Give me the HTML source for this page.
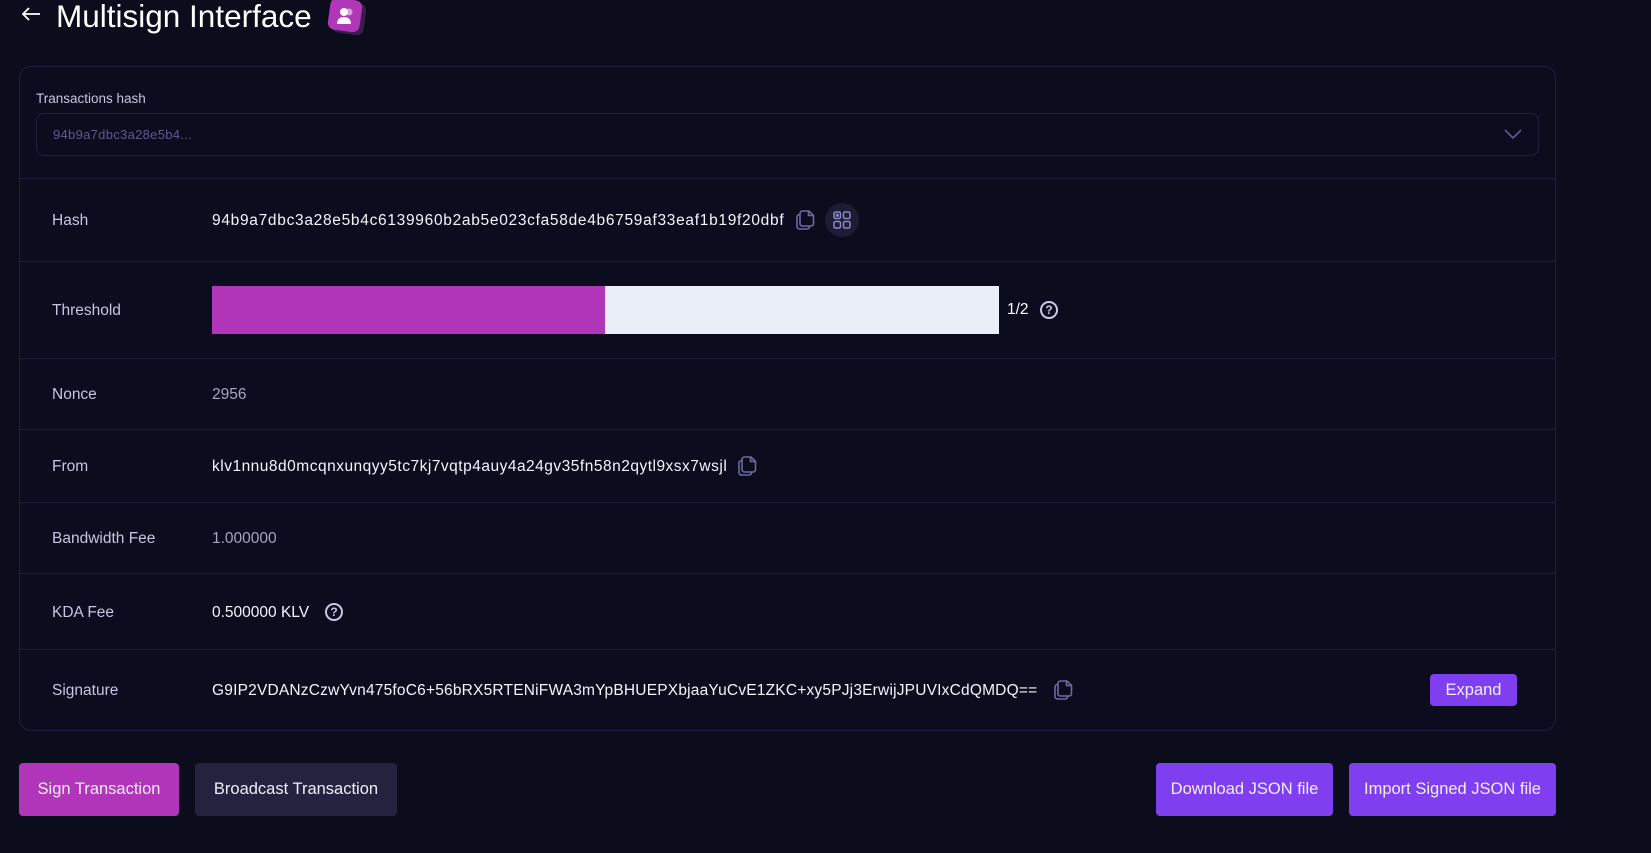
<!DOCTYPE html>
<html><head><meta charset="utf-8"><style>
*{box-sizing:border-box;margin:0;padding:0}
body{width:1651px;height:853px;background:#0b0c1c;font-family:"Liberation Sans",sans-serif;color:#fff;position:relative;overflow:hidden}
.abs{position:absolute}
.title{left:56px;top:-2px;font-size:31.5px;line-height:36px;color:#fff}
.card{left:19px;top:66px;width:1537px;height:665px;border:1px solid #1f2040;border-radius:12px;background:#0b0c1d}
.div{position:absolute;left:19px;width:1537px;height:1px;background:#1c1d38}
.lab{position:absolute;left:52px;font-size:15.5px;color:#c6c5e4;transform:translateY(-50%);margin-top:1px}
.val{position:absolute;left:212px;font-size:15.5px;color:#f4f4fa;transform:translateY(-50%);white-space:nowrap;margin-top:1px}
.btn{position:absolute;border-radius:4px;font-size:16.5px;color:#f1eefc;display:flex;align-items:center;justify-content:center}
.q{display:inline-block;width:18px;height:18px;border:2px solid #c9c8e6;border-radius:50%;font-size:12px;line-height:14px;text-align:center;color:#c9c8e6;font-weight:bold}
</style></head><body>
<svg class="abs" style="left:20px;top:6px" width="22" height="16" viewBox="0 0 22 16"><path d="M20 8H3M9 2L3 8l6 6" stroke="#fff" stroke-width="1.8" fill="none"/></svg>
<div class="abs title">Multisign Interface</div>
<div class="abs" style="left:333px;top:2px;width:32px;height:32px;border-radius:7px;background:#3a1d4a;transform:rotate(8deg)"></div>
<div class="abs" style="left:329px;top:-1px;width:32px;height:32px;border-radius:7px;background:#b038b8;transform:rotate(8deg)"></div>
<svg class="abs" style="left:335px;top:6px" width="22" height="20" viewBox="0 0 22 20"><circle cx="14" cy="6" r="3.5" fill="#d89ee0"/><circle cx="9" cy="6" r="4" fill="#fff"/><path d="M2 18c0-5 3-7 7-7s7 2 7 7z" fill="#fff"/></svg>
<div class="abs card"></div>
<div class="abs" style="left:36px;top:91px;font-size:13.5px;color:#c6c5e4">Transactions hash</div>
<div class="abs" style="left:36px;top:113px;width:1503px;height:43px;border:1px solid #1f2040;border-radius:8px"></div>
<div class="abs" style="left:53px;top:127px;font-size:13px;color:#5e5a92;letter-spacing:0.3px">94b9a7dbc3a28e5b4...</div>
<svg class="abs" style="left:1504px;top:129px" width="18" height="11" viewBox="0 0 18 11"><path d="M1 1l8 8 8-8" stroke="#5e5a92" stroke-width="1.6" fill="none"/></svg>

<div class="div" style="top:178px"></div>
<div class="div" style="top:261px"></div>
<div class="div" style="top:358px"></div>
<div class="div" style="top:429px"></div>
<div class="div" style="top:502px"></div>
<div class="div" style="top:573px"></div>
<div class="div" style="top:649px"></div>

<div class="lab" style="top:220px">Hash</div>
<div class="val" style="top:220px;letter-spacing:0.7px">94b9a7dbc3a28e5b4c6139960b2ab5e023cfa58de4b6759af33eaf1b19f20dbf</div>
<svg class="abs" style="left:795px;top:209px" width="22" height="22" viewBox="0 0 22 22" fill="none" stroke="#6d6a9e" stroke-width="1.6"><path d="M5 5.5H4.5A2.5 2.5 0 0 0 2 8v9.5A2.5 2.5 0 0 0 4.5 20H12a2.5 2.5 0 0 0 2.5-2.5V17"/><path d="M7.5 2h6.5l4.5 4.5V14.5A2.5 2.5 0 0 1 16 17H7.5A2.5 2.5 0 0 1 5 14.5V4.5A2.5 2.5 0 0 1 7.5 2z"/><path d="M13.5 2v4.5h5"/></svg>
<div class="abs" style="left:825px;top:203px;width:34px;height:34px;border-radius:50%;background:#1c1c34"></div>
<svg class="abs" style="left:832px;top:210px" width="20" height="20" viewBox="0 0 20 20" fill="none" stroke="#8a86c8" stroke-width="1.5"><rect x="2" y="2" width="6.5" height="6.5" rx="1.5"/><rect x="11.5" y="2" width="6.5" height="6.5" rx="1.5"/><rect x="2" y="11.5" width="6.5" height="6.5" rx="1.5"/><rect x="11.5" y="11.5" width="6.5" height="6.5" rx="1.5"/><rect x="4.5" y="4.5" width="1.5" height="1.5"/></svg>

<div class="lab" style="top:310px">Threshold</div>
<div class="abs" style="left:212px;top:286px;width:393px;height:48px;background:#b035b9"></div>
<div class="abs" style="left:605px;top:286px;width:394px;height:48px;background:#e9eef8"></div>
<div class="abs" style="left:1007px;top:301px;font-size:15.5px">1/2</div>
<div class="abs q" style="left:1040px;top:301px">?</div>

<div class="lab" style="top:394px">Nonce</div>
<div class="val" style="top:394px;color:#a6a5bd">2956</div>

<div class="lab" style="top:466px">From</div>
<div class="val" style="top:466px;letter-spacing:0.5px">klv1nnu8d0mcqnxunqyy5tc7kj7vqtp4auy4a24gv35fn58n2qytl9xsx7wsjl</div>
<svg class="abs" style="left:737px;top:455px" width="22" height="22" viewBox="0 0 22 22" fill="none" stroke="#6d6a9e" stroke-width="1.6"><path d="M5 5.5H4.5A2.5 2.5 0 0 0 2 8v9.5A2.5 2.5 0 0 0 4.5 20H12a2.5 2.5 0 0 0 2.5-2.5V17"/><path d="M7.5 2h6.5l4.5 4.5V14.5A2.5 2.5 0 0 1 16 17H7.5A2.5 2.5 0 0 1 5 14.5V4.5A2.5 2.5 0 0 1 7.5 2z"/><path d="M13.5 2v4.5h5"/></svg>

<div class="lab" style="top:538px">Bandwidth Fee</div>
<div class="val" style="top:538px;color:#a6a5bd">1.000000</div>

<div class="lab" style="top:612px">KDA Fee</div>
<div class="val" style="top:612px">0.500000 KLV</div>
<div class="abs q" style="left:325px;top:603px">?</div>

<div class="lab" style="top:690px">Signature</div>
<div class="val" style="top:690px;letter-spacing:0.2px">G9IP2VDANzCzwYvn475foC6+56bRX5RTENiFWA3mYpBHUEPXbjaaYuCvE1ZKC+xy5PJj3ErwijJPUVIxCdQMDQ==</div>
<svg class="abs" style="left:1053px;top:679px" width="22" height="22" viewBox="0 0 22 22" fill="none" stroke="#6d6a9e" stroke-width="1.6"><path d="M5 5.5H4.5A2.5 2.5 0 0 0 2 8v9.5A2.5 2.5 0 0 0 4.5 20H12a2.5 2.5 0 0 0 2.5-2.5V17"/><path d="M7.5 2h6.5l4.5 4.5V14.5A2.5 2.5 0 0 1 16 17H7.5A2.5 2.5 0 0 1 5 14.5V4.5A2.5 2.5 0 0 1 7.5 2z"/><path d="M13.5 2v4.5h5"/></svg>
<div class="btn" style="left:1430px;top:674px;width:87px;height:32px;background:#7f3ff0">Expand</div>

<div class="btn" style="left:19px;top:763px;width:160px;height:53px;background:#b035b9">Sign Transaction</div>
<div class="btn" style="left:195px;top:763px;width:202px;height:53px;background:#24233f">Broadcast Transaction</div>
<div class="btn" style="left:1156px;top:763px;width:177px;height:53px;background:#7f3ff0">Download JSON file</div>
<div class="btn" style="left:1349px;top:763px;width:207px;height:53px;background:#7f3ff0">Import Signed JSON file</div>
</body></html>
